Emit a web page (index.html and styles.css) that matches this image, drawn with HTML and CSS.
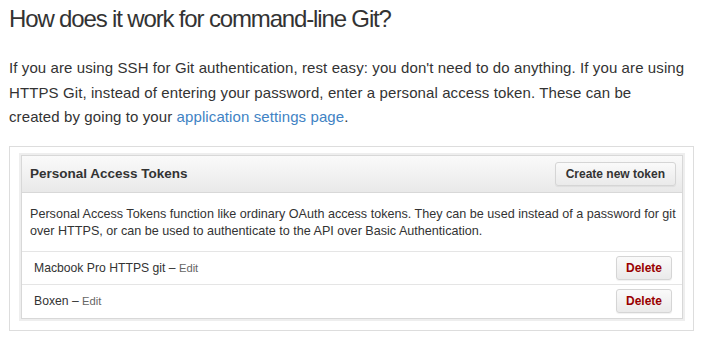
FILE: index.html
```html
<!DOCTYPE html>
<html>
<head>
<meta charset="utf-8">
<link rel="stylesheet" href="styles.css">
</head>
<body>
<h1 class="title">How does it work for command-line Git?</h1>
<p class="intro">If you are using SSH for Git authentication, rest easy: you don't need to do anything. If you are using HTTPS Git, instead of entering your password, enter a personal access token. These can be<br>created by going to your <a class="link" href="#">application settings page</a>.</p>
<div class="frame">
  <div class="box">
    <div class="box-header">
      <span class="box-title">Personal Access Tokens</span>
      <button class="btn">Create new token</button>
    </div>
    <div class="box-desc">Personal Access Tokens function like ordinary OAuth access tokens. They can be used instead of a password for git over HTTPS, or can be used to authenticate to the API over Basic Authentication.</div>
    <div class="row">
      <span class="row-name">Macbook Pro HTTPS git – <a class="edit" href="#">Edit</a></span>
      <button class="btn btn-danger">Delete</button>
    </div>
    <div class="row">
      <span class="row-name">Boxen – <a class="edit" href="#">Edit</a></span>
      <button class="btn btn-danger">Delete</button>
    </div>
  </div>
</div>
</body>
</html>
```
FILE: styles.css
```css
html, body {
  margin: 0;
  padding: 0;
  background: #fff;
}
body {
  padding: 0 10px 0 9px;
  font-family: "Liberation Sans", Arial, sans-serif;
  color: #333;
}
.title {
  margin: 0;
  padding-top: 5px;
  font-size: 24px;
  font-weight: normal;
  line-height: 28px;
  letter-spacing: -1.15px;
  color: #333;
}
.intro {
  margin: 23px 0 0;
  font-size: 15px;
  line-height: 24.5px;
  letter-spacing: 0.1px;
  color: #333;
}
.link {
  color: #4183c4;
  text-decoration: none;
}
.frame {
  margin-top: 16px;
  border: 1px solid #ddd;
  padding: 8px 10px 11px 10px;
}
.box {
  border: 1px solid #d8d8d8;
  box-shadow: 0 0 0 2px #eee;
  margin-left: 1px;
  font-family: "Liberation Sans", Arial, sans-serif;
}
.box-header {
  display: flex;
  align-items: center;
  justify-content: space-between;
  height: 36px;
  padding: 0 6px 0 8px;
  background: linear-gradient(#fafafa, #e9e9e9);
  border-bottom: 1px solid #d8d8d8;
}
.box-title {
  font-weight: bold;
  font-size: 13.5px;
  color: #333;
}
.btn {
  font-family: "Liberation Sans", Arial, sans-serif;
  font-weight: bold;
  font-size: 12px;
  color: #333;
  height: 24px;
  padding: 0 10px;
  border: 1px solid #d5d5d5;
  border-radius: 3px;
  background: linear-gradient(#fafafa, #eaeaea);
  box-shadow: 0 1px 1px rgba(0,0,0,0.06);
}
.btn-danger {
  color: #990000;
  padding: 0 9px;
}
.box-desc {
  padding: 13px 4px 11px 8px;
  font-size: 12.6px;
  line-height: 17px;
  color: #333;
  border-bottom: 1px solid #e5e5e5;
}
.row {
  display: flex;
  align-items: center;
  justify-content: space-between;
  height: 32px;
  padding: 0 10px 0 12px;
  border-bottom: 1px solid #e5e5e5;
}
.row:last-child {
  border-bottom: none;
  height: 33px;
}
.row-name {
  font-size: 12.2px;
  color: #333;
}
.edit {
  font-size: 11.2px;
  color: #666;
  text-decoration: none;
}
```
